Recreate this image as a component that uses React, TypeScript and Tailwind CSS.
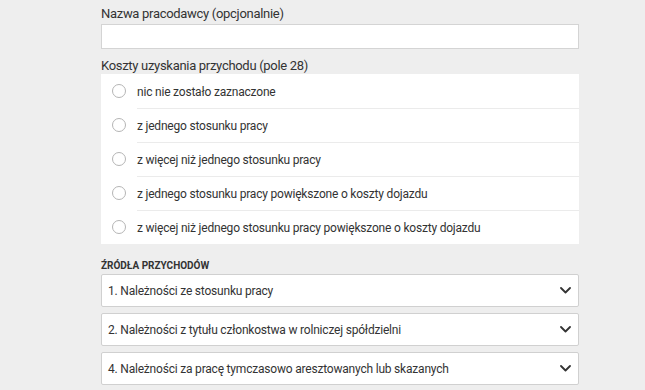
const options = [
  'nic nie zostało zaznaczone',
  'z jednego stosunku pracy',
  'z więcej niż jednego stosunku pracy',
  'z jednego stosunku pracy powiększone o koszty dojazdu',
  'z więcej niż jednego stosunku pracy powiększone o koszty dojazdu',
];

const sources = [
  '1. Należności ze stosunku pracy',
  '2. Należności z tytułu członkostwa w rolniczej spółdzielni',
  '4. Należności za pracę tymczasowo aresztowanych lub skazanych',
];

function Chevron() {
  return (
    <svg width="11" height="7" viewBox="0 0 11 7" fill="none">
      <path d="M1 1l4.5 4.5L10 1" stroke="#333" strokeWidth="1.8" strokeLinecap="round" strokeLinejoin="round" />
    </svg>
  );
}

export default function App() {
  return (
    <div
      className="w-[645px] h-[390px] overflow-hidden bg-[#eeeeee] text-[#333] pl-[101px] pt-[5px]"
      style={{ fontFamily: 'Roboto, "Liberation Sans", sans-serif' }}
    >
      <div className="w-[478px]">
        <label className="block text-[13px] tracking-[-0.3px] leading-[17px]">Nazwa pracodawcy (opcjonalnie)</label>
        <div className="mt-[2px] h-[25px] bg-white border border-[#d4d4d4]" />

        <label className="block mt-[8px] text-[13px] tracking-[-0.3px] leading-[17px]">
          Koszty uzyskania przychodu (pole 28)
        </label>
        <div className="bg-white">
          {options.map((o, i) => (
            <div key={o} className="flex items-center h-[34px]">
              <div className="w-[36px] flex justify-center shrink-0">
                <span className="block w-[14px] h-[14px] rounded-full border border-[#b5b5b5] bg-white" />
              </div>
              <div
                className={`flex-1 h-full flex items-center pt-[1px] text-[12px] tracking-[-0.2px] ${
                  i > 0 ? 'border-t border-[#ebebeb]' : ''
                }`}
              >
                {o}
              </div>
            </div>
          ))}
        </div>

        <div className="mt-[15px] text-[10px] font-bold leading-[14px] text-[#333]">ŹRÓDŁA PRZYCHODÓW</div>
        <div className="mt-[1px] flex flex-col gap-[6px]">
          {sources.map((s) => (
            <div
              key={s}
              className="h-[33px] bg-white border border-[#d0d0d0] rounded-[2px] flex items-center justify-between pl-[6px] pr-[7px] text-[12px] tracking-[-0.2px]"
            >
              <span>{s}</span>
              <Chevron />
            </div>
          ))}
        </div>
      </div>
    </div>
  );
}
